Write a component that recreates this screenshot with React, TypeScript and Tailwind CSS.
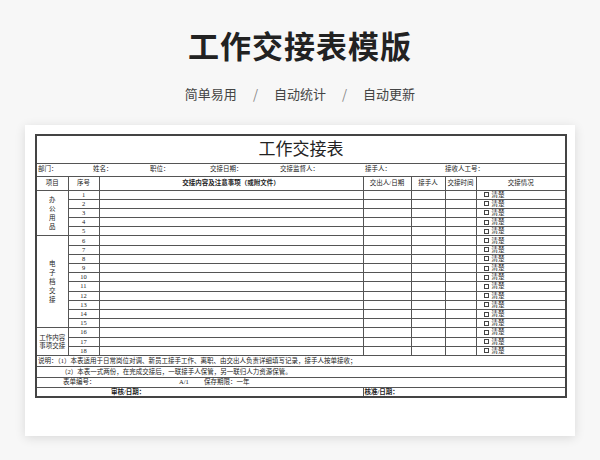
import React from "react";

const B = "border border-[#555] p-0";
export default function App() {
  const rows = Array.from({ length: 18 }, (_, i) => i + 1);
  return (
    <div className="w-[600px] h-[460px] bg-[#f7f7f7] flex flex-col items-center" style={{ fontFamily: '"Noto Sans CJK SC", sans-serif' }}>
      <div className="mt-[24px] text-[31px] font-bold text-[#222] leading-[42px] tracking-[1px]">工作交接表模版</div>
      <div className="mt-[18px] flex gap-[16px] text-[13px] text-[#444] leading-[20px]">
        <span>简单易用</span><span className="text-[#888]">/</span><span>自动统计</span><span className="text-[#888]">/</span><span>自动更新</span>
      </div>
      <div className="mt-[21px] w-[550px] h-[311px] bg-white shadow-[0_2px_10px_rgba(0,0,0,0.12)] px-[10px] pt-[9px]">
        <table className="w-[530px] border-collapse border-2 border-[#444] text-[6.5px] leading-none text-[#222] table-fixed" style={{ fontFamily: '"Liberation Serif", "Noto Sans CJK SC", serif' }}>
          <colgroup>
            <col className="w-[32px]" /><col className="w-[31px]" /><col className="w-[264px]" /><col className="w-[48px]" /><col className="w-[34px]" /><col className="w-[31px]" /><col className="w-[90px]" />
          </colgroup>
          <tbody>
            <tr className="h-[28px]"><td colSpan={7} className={`${B} text-center text-[17px]`}>工作交接表</td></tr>
            <tr className="h-[13px]"><td colSpan={7} className={B}>
              <div className="flex pl-[1px]">
                <span className="w-[55px]">部门：</span><span className="w-[57px]">姓名：</span><span className="w-[60px]">职位：</span><span className="w-[70px]">交接日期：</span><span className="w-[85px]">交接监督人：</span><span className="w-[80px]">接手人：</span><span>接收人工号：</span>
              </div></td></tr>
            <tr className="h-[14px] text-center">
              <td className={B}>项目</td><td className={B}>序号</td><td className={`${B} font-bold`}>交接内容及注意事项（或附文件）</td><td className={B}>交出人/日期</td><td className={B}>接手人</td><td className={B}>交接时间</td><td className={B}>交接情况</td>
            </tr>
            {rows.map((n) => (
              <tr key={n} className="h-[9.2px]">
                {n === 1 && <td rowSpan={5} className={`${B} text-center`}><div className="w-[7px] mx-auto leading-[9px]">办公用品</div></td>}
                {n === 6 && <td rowSpan={10} className={`${B} text-center`}><div className="w-[7px] mx-auto leading-[9px]">电子档交接</div></td>}
                {n === 16 && <td rowSpan={3} className={`${B} text-center leading-[8px] px-[1px]`}>工作内容事项交接</td>}
                <td className={`${B} text-center`}><div className="h-[8px] leading-[8px] overflow-hidden">{n}</div></td>
                <td className={B}></td><td className={B}></td><td className={B}></td><td className={B}></td>
                <td className={`${B} pl-[7px]`}><div className="h-[8px] leading-[8px] overflow-hidden whitespace-nowrap flex items-center"><span className="inline-block w-[5px] h-[5px] border border-[#444] mr-[3px]" />清楚</div></td>
              </tr>
            ))}
            <tr className="h-[11px]"><td colSpan={7} className={`${B} pl-[1px]`}>说明：（1）本表适用于日常岗位对调、新员工接手工作、离职、由交出人负责详细填写记录，接手人按单接收；</td></tr>
            <tr className="h-[11px]"><td colSpan={7} className={`${B} pl-[24px]`}>（2）本表一式两份，在完成交接后，一联接手人保管，另一联归人力资源保管。</td></tr>
            <tr className="h-[10px]"><td colSpan={7} className={`${B} pl-[26px]`}><span className="inline-block w-[116px]">表单编号：</span><span className="inline-block w-[25px]">A/1</span>保存期限：一年</td></tr>
            <tr className="h-[10px] font-bold"><td colSpan={3} className={`${B} pl-[74px]`}>审核/日期：</td><td colSpan={4} className={`${B} pl-[1px]`}>核准/日期：</td></tr>
          </tbody>
        </table>
      </div>
    </div>
  );
}
